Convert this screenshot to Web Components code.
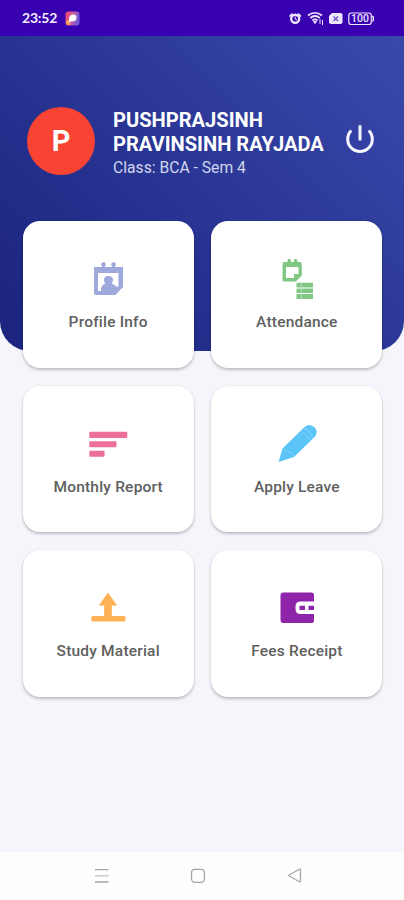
<!DOCTYPE html>
<html lang="en">
<head>
<meta charset="utf-8">
<title>Student Dashboard</title>
<style>
html,body{margin:0;height:100%}
body{font-family:Roboto,"Liberation Sans",sans-serif;background:#f4f6fb;overflow:hidden}
</style>
</head>
<body>
<student-app></student-app>

<template id="t-app">
<style>
:host{display:flex;flex-direction:column;width:404px;height:900px;background:#f4f6fb}
main{flex:1;display:flex;flex-direction:column}
.grid{display:grid;grid-template-columns:171px 171px;grid-auto-rows:146.5px;gap:18px 17.700px;margin:-130px 0 0 22.7px}
</style>
<status-bar></status-bar>
<main>
<profile-header initial="P"><span slot="name">PUSHPRAJSINH<br>PRAVINSINH RAYJADA</span><span slot="detail">Class: BCA - Sem 4</span></profile-header>
<div class="grid">
<menu-card label="Profile Info"><svg viewBox="78 254 60 50" fill="#9fa8da"><path fill-rule="evenodd" d="M94 267h29v20l-7.500 8H96q-2 0-2-2zM98 273v18h3v-2q0-4 4.500-5.500a4.500 4.500 0 0 1-1.500-3.500q0-4 4.500-4t4.500 4q0 2.500-1.500 3.500 3 .8 4.500 3h2.500V273z"/><circle cx="103.500" cy="264.500" r="2.300"/><circle cx="113.500" cy="264.500" r="2.300"/><path d="M102.300 265h2.400v3h-2.400zM112.300 265h2.400v3h-2.400z"/></svg></menu-card>
<menu-card label="Attendance"><svg viewBox="266.500 254 60 50" fill="#81c784"><path fill-rule="evenodd" d="M282 264q0-2 2-2h3v-1.500a1.700 1.700 0 0 1 3.400 0v1.500h3v-1.500a1.700 1.700 0 0 1 3.400 0v1.500h2.500q2 0 2 2v11.500l-6 6H284q-2 0-2-2zM285.500 267v11h8v-4h4.500v-7z"/><path d="M296 282.700h16.500v4.800H296zM296 288.500h16.500v4.500H296zM296 294h16.500v5H296z"/><path d="M300.700 283v16" stroke="#c5e6c7" stroke-width=".7"/></svg></menu-card>
<menu-card label="Monthly Report"><svg viewBox="78 418.500 60 50" fill="#ec6f9b"><rect x="89.300" y="431.300" width="38" height="6.200" rx="1"/><rect x="89.300" y="440.800" width="27.200" height="6" rx="1"/><rect x="89.300" y="450.300" width="15.300" height="6" rx="1"/></svg></menu-card>
<menu-card label="Apply Leave"><svg viewBox="266.500 418.500 60 50"><path d="M278 461.500l4-13.500 21.500-21q2.500-2.500 5-2.500t5 2 2.700 4.500-1.700 5L293.500 456.500z" fill="#5bc5f7"/><path d="M281.500 448.500q5 0 6.500 2.500 4 1 5.500 5M300.500 431q6 2 8.500 8.500M303.500 428q6 2 8.500 8.500" fill="none" stroke="#8fd8fb" stroke-width=".7"/></svg></menu-card>
<menu-card label="Study Material"><svg viewBox="78 583 60 50" fill="#ffb155"><path d="M107.900 592.500l9.200 13h-5.300V616h-7.700v-10.500h-5.300z"/><rect x="91.300" y="616" width="34.200" height="5.500" rx="1.500"/></svg></menu-card>
<menu-card label="Fees Receipt"><svg viewBox="266.500 583 60 50" fill="#8e24aa"><path d="M283 592.500h28q2.500 0 2.500 2.500v6.500H300q-5 0-5 5v2.500q0 5 5 5h13.500v6.500q0 2.500-2.500 2.500h-28q-3 0-3-3v-24.500q0-3 3-3z"/><path d="M299 605.700h5.500v4.300H299zM308 605.700h5.500v4.300H308z"/></svg></menu-card>
</div>
</main>
<nav-bar></nav-bar>
</template>

<template id="t-status">
<style>
:host{display:flex;height:36px;background:#3900b1;align-items:center;color:#f2ecff;padding:0 30px 0 22px;justify-content:space-between;box-sizing:border-box}
div{display:flex;align-items:center}
time{font:700 14px/18px Lato,sans-serif;width:37px;letter-spacing:-.2px;white-space:nowrap}
svg{display:block}
.app{margin-left:6px}
</style>
<div><time>23:52</time>
<svg class="app" width="15" height="15" viewBox="0 0 15 15"><defs><linearGradient id="g" x1="0" y1="0" x2="1" y2=".3"><stop offset="0" stop-color="#f04468"/><stop offset=".5" stop-color="#d65c9c"/><stop offset="1" stop-color="#7059d6"/></linearGradient></defs><rect x=".5" y=".5" width="14" height="14" rx="3" fill="url(#g)"/><path d="M1 10l3-1 1 5H3q-2 0-2-2z" fill="#f6a44c"/><path d="M3.800 11.500l.4-4.500q.5-3.500 4-3.500 3.300 0 3.300 3.300T8 10.200q-2.200 0-4.200 1.300z" fill="#fff"/></svg></div>
<svg width="86" height="20" viewBox="288 8 86 20" fill="none" stroke="#eee6ff"><circle cx="295.200" cy="18.800" r="4" stroke-width="2.400"/><path d="M289.500 16.500l3-2.800M301 16.500l-3-2.800" stroke-width="1.700"/><path d="M295.200 16.500v2.500l1.800 1" stroke-width="1"/><path d="M308 15.500q7-5.500 14 0M310.300 18q4.800-4 9.500 0M312.500 20.500q2.500-2.200 5 0" stroke-width="1.700"/><path d="M313.500 21.500h3l-1.500 2z" fill="#eee6ff"/><path d="M320 19v5M322.500 20v5" stroke-width="1"/><path d="M332 13h8.500q2 0 2 2v7q0 2-2 2h-9.500q-2 0-2-2v-6z" fill="#eee6ff" stroke="none"/><path d="M333.500 16.500l4.500 4.500M338 16.500l-4.500 4.500" stroke="#7550c7" stroke-width="1.400"/><rect x="348.800" y="13" width="22.500" height="11.500" rx="2.500" stroke-width="1.200"/><path d="M372.500 16q2 2.800 0 5.500" stroke-width="1.500"/><text x="360" y="22.400" text-anchor="middle" fill="#eee6ff" stroke="none" font-family="Roboto" font-size="10.500" font-weight="500">100</text></svg>
</template>

<template id="t-header">
<style>
:host{display:flex;box-sizing:border-box;height:315px;padding:70.500px 28px 0 27px;align-items:flex-start;background:linear-gradient(45deg,#1a237e,#3949ab);border-radius:0 0 30px 30px;color:#fff}
.av{width:68px;height:68px;border-radius:50%;background:#f94333;display:flex;align-items:center;justify-content:center;font-weight:700;font-size:29px;flex:none}
.tx{margin:1px 0 0 18px;flex:1;white-space:nowrap}
.n{font-weight:700;font-size:20.100px;line-height:24px;display:block}
.d{display:block;font-size:15.700px;line-height:24px;color:#d2d6ed}
svg{flex:none;margin-top:17.500px}
</style>
<div class="av"></div>
<div class="tx"><div class="n"><slot name="name"></slot></div><div class="d"><slot name="detail"></slot></div></div>
<svg width="32" height="32" viewBox="344 124 32 32" fill="none" stroke="#f5f6ff" stroke-width="3"><path d="M360 125.200v15.300M351.300 130.500a12.300 12.300 0 1 0 17.400 0"/></svg>
</template>

<template id="t-card">
<style>
:host{display:flex;flex-direction:column;align-items:center;box-sizing:border-box;padding-top:33px;background:#fff;border-radius:17px;box-shadow:0 2px 3px rgba(0,0,0,.22),0 0 2px rgba(0,0,0,.08)}
::slotted(svg){width:60px;height:50px;flex:none}
.l{margin-top:8.400px;font-weight:500;font-size:15.500px;letter-spacing:.2px;line-height:20px;color:#606060;white-space:nowrap}
</style>
<slot></slot><div class="l"></div>
</template>

<template id="t-nav">
<style>
:host{display:block;height:48px;background:#fefefe}
svg{display:block}
</style>
<svg width="404" height="48" viewBox="0 852 404 48" fill="none" stroke="#a5a5a5" stroke-width="1.300"><path d="M95 869.700h13.500M95 882h13.500"/><path d="M95 875.800h13.500" stroke="#c0c0c0"/><rect x="191.500" y="869.300" width="13" height="13" rx="3.500"/><path d="M289.500 874.700l9.500-5.200q1.500-.8 1.500 1v10q0 1.800-1.500 1l-9.500-5.200q-1.500-.8 0-1.600z"/></svg>
</template>

<script>
class TemplateElement extends HTMLElement{
  constructor(id){
    super();
    this.attachShadow({mode:"open"}).append(document.getElementById(id).content.cloneNode(true));
  }
}
customElements.define("status-bar",class extends TemplateElement{constructor(){super("t-status")}});
customElements.define("nav-bar",class extends TemplateElement{constructor(){super("t-nav")}});
customElements.define("profile-header",class extends TemplateElement{
  constructor(){super("t-header")}
  connectedCallback(){this.shadowRoot.querySelector(".av").textContent=this.getAttribute("initial")}
});
customElements.define("menu-card",class extends TemplateElement{
  constructor(){super("t-card")}
  connectedCallback(){this.shadowRoot.querySelector(".l").textContent=this.getAttribute("label")}
});
customElements.define("student-app",class extends TemplateElement{constructor(){super("t-app")}});
</script>
</body>
</html>
